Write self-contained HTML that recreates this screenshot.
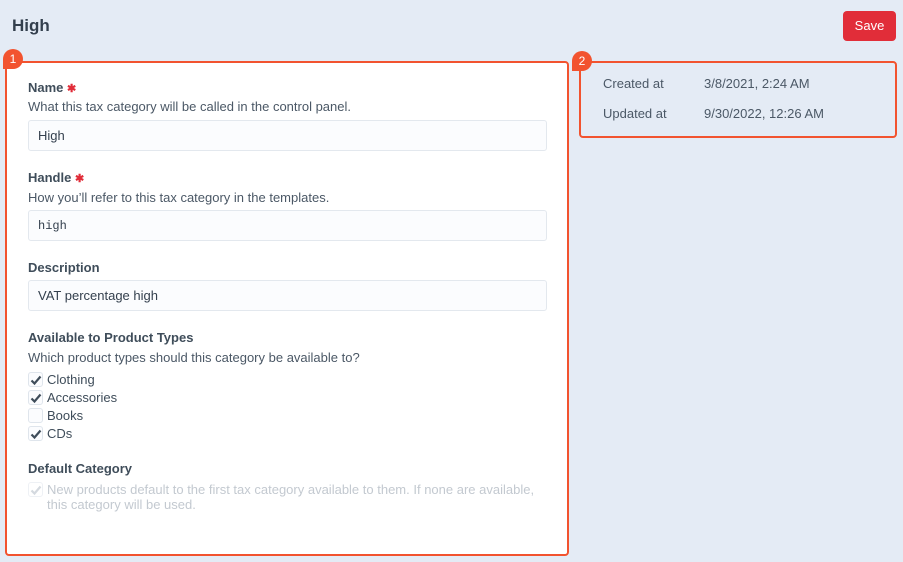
<!DOCTYPE html>
<html><head><style>
*{box-sizing:border-box;margin:0;padding:0}
body{width:903px;height:562px;background:#e4ebf5;font-family:"Liberation Sans",sans-serif;color:#3f4d5a;position:relative;overflow:hidden;font-size:13px}
.a{position:absolute;white-space:nowrap}
h1{position:absolute;left:12px;top:16px;font-size:17px;font-weight:bold;color:#333f4d}
.save{position:absolute;left:843px;top:11px;width:53px;height:30px;background:#e12d39;border-radius:4px;color:#fff;font-size:13px;text-align:center;line-height:30px}
.panel{position:absolute;left:5px;top:61px;width:564px;height:495px;background:#fff;border:2px solid #f2532f;border-radius:4px}
.box2{position:absolute;left:579px;top:61px;width:318px;height:77px;border:2px solid #f2532f;border-radius:4px}
.badge{position:absolute;width:20px;height:20px;border-radius:10px 10px 10px 0;background:#f2532f;color:#fff;font-size:12px;text-align:center;line-height:20px}
.lbl{font-weight:bold;color:#3f4d5a;font-size:13px}
.req{color:#e12d39;font-size:11px}
.ins{color:#4b5866;font-size:13px}
.inp{position:absolute;left:28px;width:519px;height:31px;background:#fbfcfe;border:1px solid #e3e8ee;border-radius:3px;padding-left:9px;line-height:29px;font-size:13px;color:#333f4d}
.cb{position:absolute;left:28px;width:15px;height:15px;border:1px solid #dfe5ec;border-radius:3px;background:#fbfcfe}
.cb svg{position:absolute;left:1px;top:1px}
</style></head><body>
<h1>High</h1>
<div class="save">Save</div>
<div class="panel"></div>
<div class="badge" style="left:3px;top:49px">1</div>
<div class="box2"></div>
<div class="badge" style="left:572px;top:51px">2</div>
<div class="a" style="left:603px;top:76px;color:#4b5866">Created at</div>
<div class="a" style="left:704px;top:76px;color:#4b5866">3/8/2021, 2:24 AM</div>
<div class="a" style="left:603px;top:106px;color:#4b5866">Updated at</div>
<div class="a" style="left:704px;top:106px;color:#4b5866">9/30/2022, 12:26 AM</div>

<div class="a lbl" style="left:28px;top:80px">Name <span class="req">✱</span></div>
<div class="a ins" style="left:28px;top:99px">What this tax category will be called in the control panel.</div>
<div class="inp" style="top:120px">High</div>
<div class="a lbl" style="left:28px;top:170px">Handle <span class="req">✱</span></div>
<div class="a ins" style="left:28px;top:190px">How you’ll refer to this tax category in the templates.</div>
<div class="inp" style="top:210px;font-family:'Liberation Mono',monospace;font-size:12px;line-height:31px">high</div>
<div class="a lbl" style="left:28px;top:260px">Description</div>
<div class="inp" style="top:280px">VAT percentage high</div>
<div class="a lbl" style="left:28px;top:330px">Available to Product Types</div>
<div class="a ins" style="left:28px;top:350px">Which product types should this category be available to?</div>
<div class="cb" style="top:372px"><svg width="12" height="12" viewBox="0 0 12 12"><path d="M1.5 6.5 L4.5 9.5 L10.5 2.5" stroke="#3f4d5a" stroke-width="2.2" fill="none"/></svg></div>
<div class="a" style="left:47px;top:372px">Clothing</div>
<div class="cb" style="top:390px"><svg width="12" height="12" viewBox="0 0 12 12"><path d="M1.5 6.5 L4.5 9.5 L10.5 2.5" stroke="#3f4d5a" stroke-width="2.2" fill="none"/></svg></div>
<div class="a" style="left:47px;top:390px">Accessories</div>
<div class="cb" style="top:408px"></div>
<div class="a" style="left:47px;top:408px">Books</div>
<div class="cb" style="top:426px"><svg width="12" height="12" viewBox="0 0 12 12"><path d="M1.5 6.5 L4.5 9.5 L10.5 2.5" stroke="#3f4d5a" stroke-width="2.2" fill="none"/></svg></div>
<div class="a" style="left:47px;top:426px">CDs</div>
<div class="a lbl" style="left:28px;top:461px">Default Category</div>
<div class="cb" style="top:482px;border-color:#eef1f5;background:#fff"><svg width="12" height="12" viewBox="0 0 12 12"><path d="M1.5 6.5 L4.5 9.5 L10.5 2.5" stroke="#d4d9df" stroke-width="2.2" fill="none"/></svg></div>
<div class="a" style="left:47px;top:482px;color:#c3c9d0;line-height:15px">New products default to the first tax category available to them. If none are available,<br>this category will be used.</div>
</body></html>
